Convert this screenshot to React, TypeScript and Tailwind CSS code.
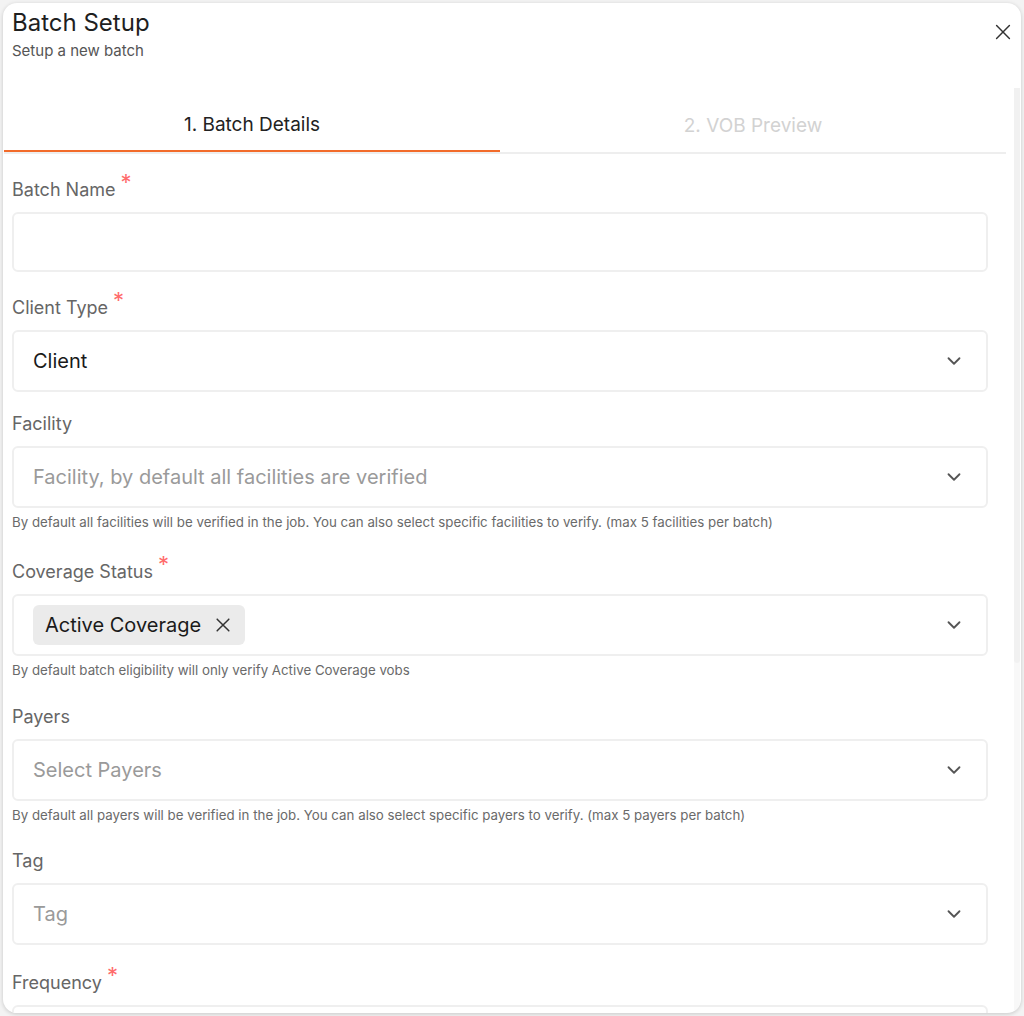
import React from "react";

function Chevron() {
  return (
    <svg width="22" height="22" viewBox="0 0 24 24" fill="none" stroke="#555555" strokeWidth="2" strokeLinecap="round" strokeLinejoin="round">
      <path d="M6 9l6 6 6-6" />
    </svg>
  );
}

function Cross({ size = 14, color = "#333333", w = 2 }: { size?: number; color?: string; w?: number }) {
  return (
    <svg width={size} height={size} viewBox="0 0 24 24" fill="none" stroke={color} strokeWidth={w} strokeLinecap="round">
      <path d="M5 5l14 14M19 5L5 19" />
    </svg>
  );
}

function Label({ text, required }: { text: string; required?: boolean }) {
  return (
    <div className="flex h-[24px] items-center text-[18px] leading-[24px] text-[#666666]">
      <span>{text}</span>
      {required && (
        <span className="relative -top-[8px] ml-[5px] text-[22px] leading-none text-[#ff6b6b]">*</span>
      )}
    </div>
  );
}

function Select({ children }: { children?: React.ReactNode }) {
  return (
    <div className="mt-[10px] flex h-[62px] items-center justify-between rounded-[6px] border-2 border-[#efefef] bg-white pl-[19px] pr-[21px]">
      <div className="flex items-center">{children}</div>
      <Chevron />
    </div>
  );
}

function Helper({ text }: { text: string }) {
  return <div className="mt-[6px] text-[13.3px] leading-[16px] text-[#6a6a6a]">{text}</div>;
}

export default function App() {
  return (
    <div className="h-[1016px] w-full overflow-hidden bg-[#f3f3f3] p-[3px] font-['Inter',sans-serif]">
      <div className="flex h-[1010px] flex-col overflow-hidden rounded-[14px] bg-white shadow-[0_1px_4px_rgba(0,0,0,0.18)]">
        {/* header */}
        <div className="flex h-[85px] shrink-0 items-start justify-between pl-[9px] pr-[7px]">
          <div className="pt-[5px]">
            <div className="text-[24px] leading-[30px] text-[#1f1f1f]">Batch Setup</div>
            <div className="mt-[3px] text-[15px] leading-[20px] text-[#555555]">Setup a new batch</div>
          </div>
          <div className="pt-[18px]">
            <Cross size={22} color="#333333" w={1.6} />
          </div>
        </div>

        {/* body */}
        <div className="flex min-h-0 flex-1">
          <div className="ml-[1px] flex w-[1002px] shrink-0 flex-col">
            {/* tabs */}
            <div className="flex h-[66px] shrink-0 border-b-2 border-[#eeeeee]">
              <div className="flex w-[496px] items-center justify-center border-b-2 border-[#f26b2a] pt-[12px] text-[19px] text-[#222222]">
                1. Batch Details
              </div>
              <div className="flex flex-1 items-center justify-center pt-[12px] text-[19px] text-[#d2d2d2]">
                2. VOB Preview
              </div>
            </div>

            {/* form */}
            <div className="flex shrink-0 flex-col pl-[8px] pr-[18px] pt-[24px]">
              <Label text="Batch Name" required />
              <div className="mt-[10px] h-[60px] rounded-[6px] border-2 border-[#efefef] bg-white" />

              <div className="mt-[24px]">
                <Label text="Client Type" required />
                <Select>
                  <span className="text-[20px] text-[#1a1a1a]">Client</span>
                </Select>
              </div>

              <div className="mt-[20px]">
                <Label text="Facility" />
                <Select>
                  <span className="text-[20px] text-[#9a9a9a]">Facility, by default all facilities are verified</span>
                </Select>
                <Helper text="By default all facilities will be verified in the job. You can also select specific facilities to verify. (max 5 facilities per batch)" />
              </div>

              <div className="mt-[30px]">
                <Label text="Coverage Status" required />
                <Select>
                  <span className="flex h-[40px] items-center gap-[12px] rounded-[6px] bg-[#ebebeb] pl-[12px] pr-[12px] text-[20px] text-[#1a1a1a]">
                    Active Coverage
                    <Cross size={20} color="#333333" w={1.8} />
                  </span>
                </Select>
                <Helper text="By default batch eligibility will only verify Active Coverage vobs" />
              </div>

              <div className="mt-[27px]">
                <Label text="Payers" />
                <Select>
                  <span className="text-[20px] text-[#9a9a9a]">Select Payers</span>
                </Select>
                <Helper text="By default all payers will be verified in the job. You can also select specific payers to verify. (max 5 payers per batch)" />
              </div>

              <div className="mt-[26px]">
                <Label text="Tag" />
                <Select>
                  <span className="text-[20px] text-[#9a9a9a]">Tag</span>
                </Select>
              </div>

              <div className="mt-[26px]">
                <Label text="Frequency" required />
                <Select>
                  <span className="text-[20px] text-[#9a9a9a]"></span>
                </Select>
              </div>
            </div>
          </div>

          {/* scrollbar */}
          <div className="ml-[8px] w-[6px] shrink-0 bg-[#f8f8f8]">
            <div className="h-[575px] rounded-b-[3px] bg-[#f1f1f1]" />
          </div>
        </div>
      </div>
    </div>
  );
}
